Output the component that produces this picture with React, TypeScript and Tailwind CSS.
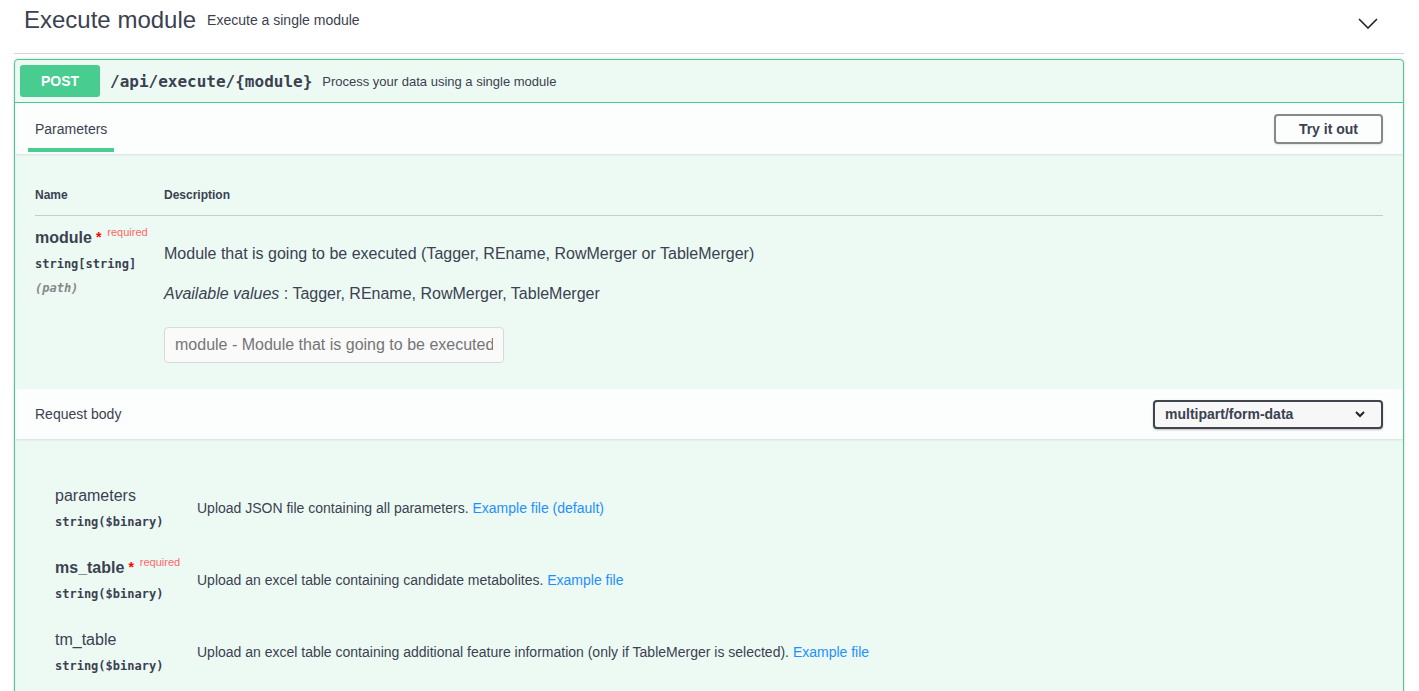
import React from 'react';

const sans = "font-['Liberation_Sans',Arial,sans-serif]";
const mono = "font-['DejaVu_Sans_Mono',monospace]";

function Chevron() {
  return (
    <svg width="20" height="11" viewBox="0 0 20 11" fill="none">
      <path d="M1 1 L10 10 L19 1" stroke="#222" strokeWidth="1.6" />
    </svg>
  );
}

function SmallChevron() {
  return (
    <svg width="10" height="7" viewBox="0 0 10 7" fill="none">
      <path d="M1 1 L5 5 L9 1" stroke="#222" strokeWidth="2" />
    </svg>
  );
}

function Required() {
  return (
    <>
      <span className="text-[#ff0000] text-[14px] leading-none font-bold ml-[4px] relative top-[-1px]">*</span>
      <span className="text-[#ff6666] text-[11px] leading-none font-normal ml-[6px] relative top-[-7px]">required</span>
    </>
  );
}

const bodyParams = [
  {
    name: 'parameters',
    required: false,
    desc: 'Upload JSON file containing all parameters.',
    link: 'Example file (default)',
  },
  {
    name: 'ms_table',
    required: true,
    desc: 'Upload an excel table containing candidate metabolites.',
    link: 'Example file',
  },
  {
    name: 'tm_table',
    required: false,
    desc: 'Upload an excel table containing additional feature information (only if TableMerger is selected).',
    link: 'Example file',
  },
];

export default function App() {
  return (
    <div className={`${sans} bg-white text-[#3b4151] pl-[14px] pr-[15px] h-[691px] overflow-hidden`}>
      {/* Tag heading */}
      <div className="flex items-center h-[54px] pb-[12px] pl-[10px] pr-[26px] border-b border-[#d3d5da]">
        <h3 className="text-[24px] leading-[30px] mt-[-2px]">Execute module</h3>
        <span className="text-[14px] ml-[11px] mt-[-1px]">Execute a single module</span>
        <div className="ml-auto mt-[6px]">
          <Chevron />
        </div>
      </div>

      {/* Operation block */}
      <div className="mt-[5px] border border-[#49cc90] rounded-[4px] bg-[#edfaf4] shadow-[0_0_3px_rgba(0,0,0,0.19)] min-h-[700px]">
        <div className="flex items-center p-[5px] border-b border-[#49cc90]">
          <span className="w-[80px] h-[32px] leading-[32px] rounded-[3px] bg-[#49cc90] text-white text-[14px] font-bold text-center">POST</span>
          <span className={`${mono} px-[10px] text-[16px] leading-[20px] font-bold mt-[1px]`}>/api/execute/{'{module}'}</span>
          <span className="text-[13px] mt-[1px]">Process your data using a single module</span>
        </div>

        {/* Parameters header */}
        <div className="flex items-center h-[51px] px-5 bg-[#fbfefd] shadow-[0_1px_2px_rgba(0,0,0,0.1)]">
          <div className="-ml-[7px] px-[7px] pt-[16px] pb-[11px] border-b-4 border-[#49cc90] text-[14px] leading-[16px]">Parameters</div>
          <button className="ml-auto mt-[1px] h-[30px] px-[23px] border-2 border-[#888] rounded-[4px] text-[14px] font-bold shadow-[0_1px_2px_rgba(0,0,0,0.1)]">Try it out</button>
        </div>

        {/* Parameters table */}
        <div className="px-5 pt-5">
          <div className="flex border-b border-[#c6cbd0] pt-[14px] pb-[12px] text-[12px] font-bold leading-[15px]">
            <div className="w-[129px]">Name</div>
            <div>Description</div>
          </div>
          <div className="flex pt-[12px] pb-[26px]">
            <div className="w-[129px]">
              <div className="text-[16px] font-bold leading-[20px] h-[20px] whitespace-nowrap">
                module
                <Required />
              </div>
              <div className={`${mono} mt-[4px] text-[12px] font-bold leading-[24px]`}>string[string]</div>
              <div className={`${mono} text-[12px] font-bold italic leading-[24px] text-[#888]`}>(path)</div>
            </div>
            <div className="pt-[16px] text-[16px]">
              <p className="leading-[19px]">Module that is going to be executed (Tagger, REname, RowMerger or TableMerger)</p>
              <p className="mt-[21px] leading-[19px]"><i>Available values</i> : Tagger, REname, RowMerger, TableMerger</p>
              <input
                className="mt-[24px] w-[340px] h-[36px] px-[10px] border border-[#d9d9d9] rounded-[4px] bg-[#fafafa] text-[16px] placeholder:text-[#757575] outline-none"
                placeholder="module - Module that is going to be executed"
              />
            </div>
          </div>
        </div>

        {/* Request body header */}
        <div className="flex items-center h-[50px] px-5 bg-[#fbfefd] shadow-[0_1px_2px_rgba(0,0,0,0.1)]">
          <div className="text-[14px]">Request body</div>
          <div className="ml-auto flex items-center w-[230px] h-[29px] pl-[10px] pr-[16px] border-2 border-[#41444e] rounded-[4px] bg-[#f7f7f7] shadow-[0_1px_2px_rgba(0,0,0,0.25)]">
            <span className="text-[14px] font-bold">multipart/form-data</span>
            <div className="ml-auto">
              <SmallChevron />
            </div>
          </div>
        </div>

        {/* Request body params */}
        <div className="pl-[40px] pr-5 pt-[35px]">
          {bodyParams.map((p, i) => (
            <div key={i} className="flex items-center py-[12px]">
              <div className="w-[142px]">
                <div className={`text-[16px] leading-[20px] h-[20px] whitespace-nowrap ${p.required ? 'font-bold' : ''}`}>
                  {p.name}
                  {p.required && <Required />}
                </div>
                <div className={`${mono} mt-[4px] text-[12px] font-bold leading-[24px]`}>string($binary)</div>
              </div>
              <div className="text-[14px] mt-[-4px]">
                {p.desc} <a className="text-[#1f8fff]">{p.link}</a>
              </div>
            </div>
          ))}
        </div>
      </div>
    </div>
  );
}
